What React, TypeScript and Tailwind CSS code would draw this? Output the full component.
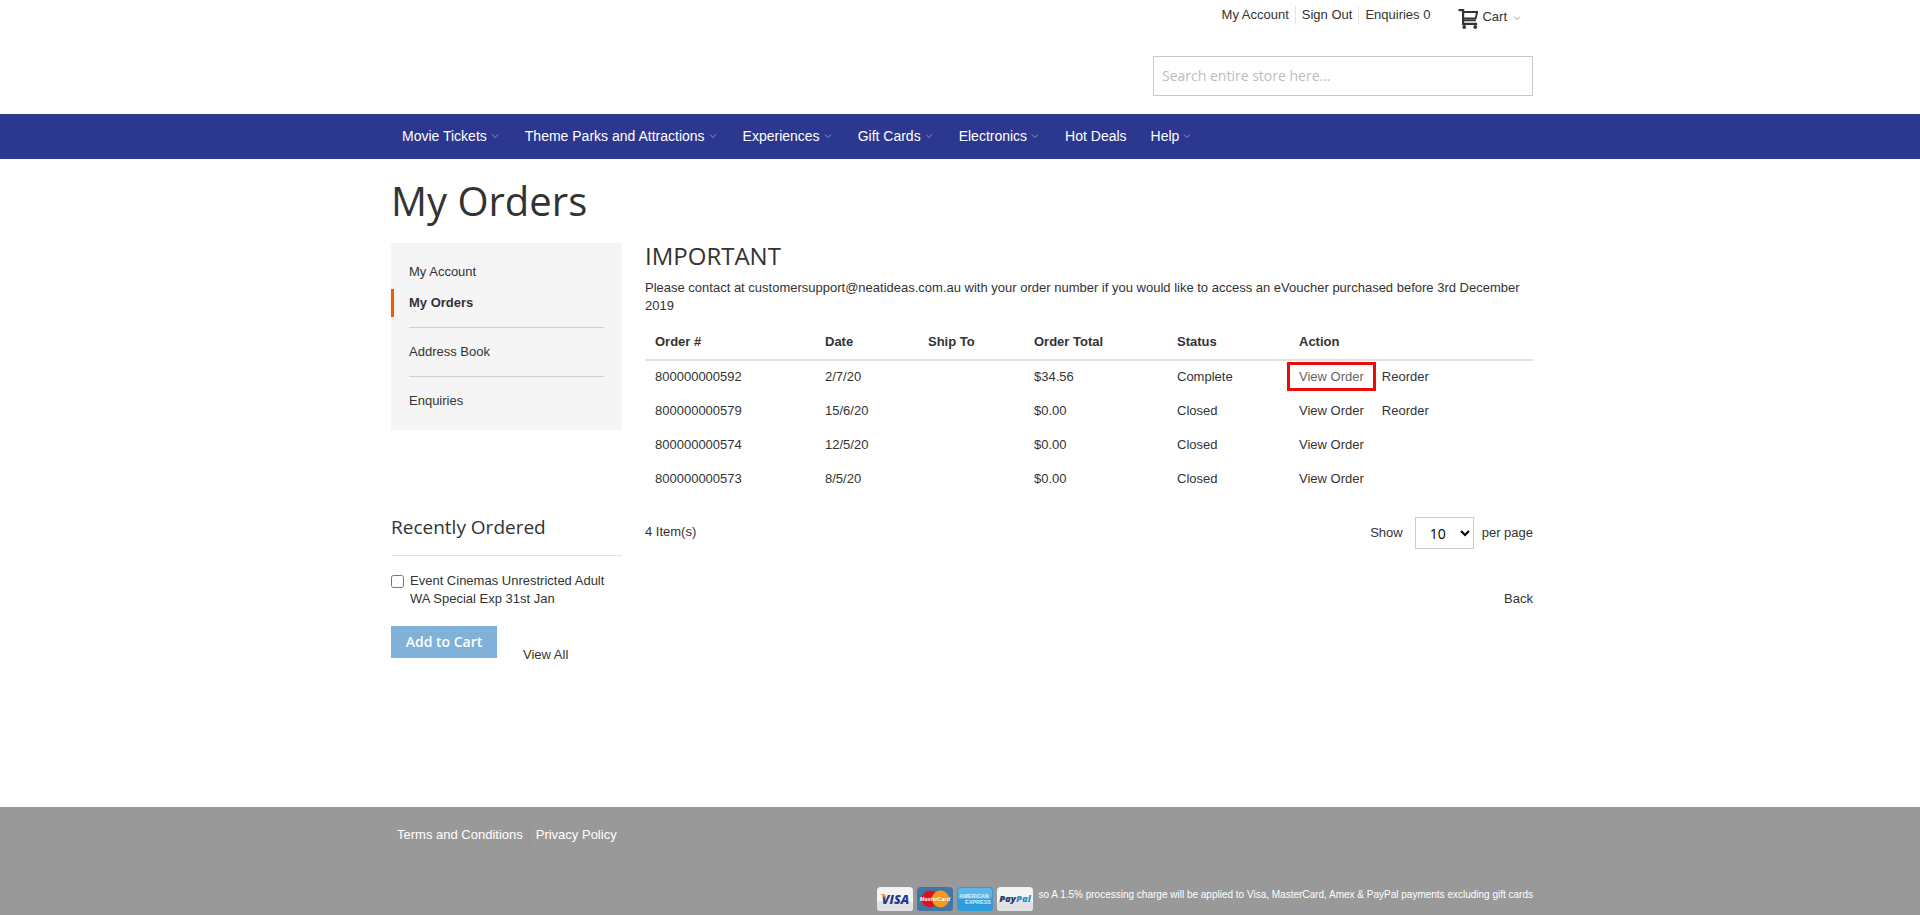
import React, { useState } from 'react';
import clsx from 'clsx';

interface NavItem {
  label: string;
  hasMenu: boolean;
}

interface Order {
  id: string;
  date: string;
  shipTo: string;
  total: string;
  status: string;
  canReorder: boolean;
}

const navItems: NavItem[] = [
  { label: 'Movie Tickets', hasMenu: true },
  { label: 'Theme Parks and Attractions', hasMenu: true },
  { label: 'Experiences', hasMenu: true },
  { label: 'Gift Cards', hasMenu: true },
  { label: 'Electronics', hasMenu: true },
  { label: 'Hot Deals', hasMenu: false },
  { label: 'Help', hasMenu: true },
];

const orders: Order[] = [
  { id: '800000000592', date: '2/7/20', shipTo: '', total: '$34.56', status: 'Complete', canReorder: true },
  { id: '800000000579', date: '15/6/20', shipTo: '', total: '$0.00', status: 'Closed', canReorder: true },
  { id: '800000000574', date: '12/5/20', shipTo: '', total: '$0.00', status: 'Closed', canReorder: false },
  { id: '800000000573', date: '8/5/20', shipTo: '', total: '$0.00', status: 'Closed', canReorder: false },
];

const columns = [
  { label: 'Order #', width: 'w-[170px]' },
  { label: 'Date', width: 'w-[103px]' },
  { label: 'Ship To', width: 'w-[106px]' },
  { label: 'Order Total', width: 'w-[143px]' },
  { label: 'Status', width: 'w-[122px]' },
  { label: 'Action', width: 'w-auto' },
];

const Container: React.FC<{ className?: string; children: React.ReactNode }> = ({ className, children }) => (
  <div className={clsx('mx-auto w-full max-w-[1146px] pl-1', className)}>{children}</div>
);

const Chevron: React.FC<{ className?: string }> = ({ className }) => (
  <svg className={clsx('h-2 w-2', className)} viewBox="0 0 8 8" fill="none" stroke="currentColor" aria-hidden="true">
    <path d="M1 2.5 4 5.5 7 2.5" />
  </svg>
);

const CartIcon = () => (
  <svg className="h-5 w-5" viewBox="0 0 20 20" fill="none" stroke="#333" aria-hidden="true">
    <path d="M.5 1.2h4.6v13.6h14" strokeWidth="2.2" />
    <path d="M5 3h14.2l-1.6 6.4H5M5 11.4h13" strokeWidth="1.9" />
    <circle cx="6.2" cy="18" r="1.9" fill="#333" stroke="none" />
    <circle cx="17.2" cy="18" r="1.9" fill="#333" stroke="none" />
  </svg>
);

const Header = () => (
  <header>
    <Container className="flex flex-col items-end">
      <div className="flex h-8 items-start pt-1.5 pr-3">
        <ul className="flex items-center">
          <li><a href="#account">My Account</a></li>
          <li className="ml-1.5 border-l border-[#e4e4e4] pl-1.5"><a href="#signout">Sign Out</a></li>
          <li className="ml-1.5 border-l border-[#e4e4e4] pl-1.5"><a href="#enquiries">Enquiries 0</a></li>
        </ul>
        <a href="#cart" className="ml-7 flex items-center pt-0.5">
          <CartIcon />
          <span className="ml-1 pb-1">Cart</span>
          <Chevron className="mb-0.5 ml-1.5 text-[#999]" />
        </a>
      </div>
      <input
        type="search"
        aria-label="Search"
        placeholder="Search entire store here..."
        className="mt-6 mb-[18px] h-10 w-[380px] border border-[#c8c8c8] bg-white px-2 pb-0.5 font-['Open_Sans',sans-serif] text-sm outline-none placeholder:text-[#bdbdbd]"
      />
    </Container>
    <nav className="bg-[#2c378f] text-white">
      <Container className="flex h-[45px] items-center gap-6 pb-0.5 text-sm">
        {navItems.map((item, i) => (
          <a key={item.label} href="#" className={clsx('flex items-center', i === 0 && 'ml-[11px]', item.hasMenu && 'pr-0.5')}>
            {item.label}
            {item.hasMenu && <Chevron className="ml-1 text-[#8a91c4]" />}
          </a>
        ))}
      </Container>
    </nav>
  </header>
);

const AccountMenu = () => (
  <ul className="bg-[#f5f5f5] py-[15px]">
    <li><a href="#account" className="block px-[18px] py-[5px]">My Account</a></li>
    <li className="mt-[3px] border-l-3 border-[#ff5501] px-[15px] py-[5px]"><strong>My Orders</strong></li>
    <li className="mx-[18px] my-2.5 border-t border-[#d1d1d1]"></li>
    <li><a href="#address" className="block px-[18px] py-[5px]">Address Book</a></li>
    <li className="mx-[18px] my-2.5 border-t border-[#d1d1d1]"></li>
    <li><a href="#enquiries" className="block px-[18px] py-[5px]">Enquiries</a></li>
  </ul>
);

const RecentlyOrdered = () => {
  const [checked, setChecked] = useState(false);

  return (
    <section className="mt-[85px]">
      <h2 className="border-b border-[#e5e5e5] pb-4 font-['Open_Sans',sans-serif] text-[19px] leading-6">Recently Ordered</h2>
      <div className="mt-4 flex items-start">
        <input
          id="recent-item"
          type="checkbox"
          checked={checked}
          onChange={(e) => setChecked(e.target.checked)}
          className="mt-[3px] h-[13px] w-[13px]"
        />
        <label htmlFor="recent-item" className="ml-1.5 w-[205px]">Event Cinemas Unrestricted Adult WA Special Exp 31st Jan</label>
      </div>
      <div className="mt-[18px] flex">
        <button type="button" className="h-8 w-[106px] bg-[#7fb1d9] font-['Open_Sans',sans-serif] text-sm font-semibold text-white">
          Add to Cart
        </button>
        <a href="#all" className="ml-[26px] mt-5">View All</a>
      </div>
    </section>
  );
};

const OrdersTable = () => (
  <table className="mt-[11px] w-full table-fixed border-collapse text-left">
    <thead>
      <tr className="border-b-2 border-[#e2e2e2]">
        {columns.map((col) => (
          <th key={col.label} scope="col" className={clsx('px-2.5 pt-[7px] pb-2 font-bold', col.width)}>{col.label}</th>
        ))}
      </tr>
    </thead>
    <tbody>
      {orders.map((order, i) => (
        <tr key={order.id}>
          <td className="px-2.5 pt-[7px] pb-[9px]">{order.id}</td>
          <td className="px-2.5 pt-[7px] pb-[9px]">{order.date}</td>
          <td className="px-2.5 pt-[7px] pb-[9px]">{order.shipTo}</td>
          <td className="px-2.5 pt-[7px] pb-[9px]">{order.total}</td>
          <td className="px-2.5 pt-[7px] pb-[9px]">{order.status}</td>
          <td className="px-2.5 pt-[7px] pb-[9px]">
            <a href="#view" className={clsx('relative', i === 0 && 'text-[#666]')}>
              View Order
              {i === 0 && <span className="absolute -inset-x-3 -inset-y-[7px] border-3 border-[#ea0b0b]"></span>}
            </a>
            {order.canReorder && <a href="#reorder" className="ml-[18px]">Reorder</a>}
          </td>
        </tr>
      ))}
    </tbody>
  </table>
);

const Toolbar = () => {
  const [limit, setLimit] = useState('10');

  return (
    <div className="mt-5 flex items-start justify-between">
      <p className="mt-1.5">4 Item(s)</p>
      <div className="flex items-center">
        <label htmlFor="limiter">Show</label>
        <select
          id="limiter"
          value={limit}
          onChange={(e) => setLimit(e.target.value)}
          className="mr-2 ml-3 h-8 w-[59px] border border-[#ccc] bg-white pl-2.5 font-['Open_Sans',sans-serif] text-sm text-black"
        >
          <option value="10">10</option>
          <option value="20">20</option>
          <option value="50">50</option>
        </select>
        <span>per page</span>
      </div>
    </div>
  );
};

const PaymentCards = () => (
  <div className="flex gap-1">
    <svg className="h-6 w-9" viewBox="0 0 36 24" role="img" aria-label="Visa">
      <rect width="36" height="24" rx="3.5" fill="#f4f4f5" />
      <rect y="14" width="36" height="10" rx="3.5" fill="#e2e2e5" />
      <text x="18.5" y="16.5" textAnchor="middle" fontFamily="Open Sans" fontSize="12.5" fontWeight="800" fontStyle="italic" fill="#1f3a8c">VISA</text>
      <path d="M3.5 7h4l2 5z" fill="#e9a021" />
    </svg>
    <svg className="h-6 w-9" viewBox="0 0 36 24" role="img" aria-label="MasterCard">
      <rect width="36" height="24" rx="3.5" fill="#3f77a8" />
      <circle cx="13" cy="12" r="8.5" fill="#d9141a" />
      <circle cx="23.5" cy="12" r="8.5" fill="#f59a1c" />
      <text x="18" y="14" textAnchor="middle" fontFamily="Liberation Sans" fontSize="5.5" fontWeight="700" fontStyle="italic" fill="#fff">MasterCard</text>
    </svg>
    <svg className="h-6 w-9" viewBox="0 0 36 24" role="img" aria-label="American Express">
      <rect width="36" height="24" rx="3.5" fill="#2f9cdc" />
      <rect x="1" y="1" width="34" height="11" rx="3" fill="#5cb7e8" />
      <text x="17" y="11" textAnchor="middle" fontFamily="Liberation Sans" fontSize="5.5" fontWeight="700" fill="#d8effb">AMERICAN</text>
      <text x="21" y="17" textAnchor="middle" fontFamily="Liberation Sans" fontSize="5.5" fontWeight="700" fill="#d8effb">EXPRESS</text>
    </svg>
    <svg className="h-6 w-9" viewBox="0 0 36 24" role="img" aria-label="PayPal">
      <rect width="36" height="24" rx="3.5" fill="#f4f4f5" />
      <rect y="14" width="36" height="10" rx="3.5" fill="#e2e2e5" />
      <text x="18" y="15" textAnchor="middle" fontFamily="Open Sans" fontSize="9.5" fontWeight="800" fontStyle="italic">
        <tspan fill="#1c3a6b">Pay</tspan>
        <tspan fill="#2790c3">Pal</tspan>
      </text>
    </svg>
  </div>
);

const Footer = () => (
  <footer className="mt-auto bg-[#999] text-white">
    <Container>
      <ul className="flex pt-[19px] pl-1.5">
        <li><a href="#terms">Terms and Conditions</a></li>
        <li className="ml-1.5 border-l border-[#8f8f8f] pl-1.5"><a href="#privacy">Privacy Policy</a></li>
      </ul>
      <div className="mt-[43px] flex justify-end gap-[5px] pb-1">
        <PaymentCards />
        <p className="text-[10px] leading-4">so A 1.5% processing charge will be applied to Visa, MasterCard, Amex &amp; PayPal payments excluding gift cards</p>
      </div>
    </Container>
  </footer>
);

const App = () => (
  <div className="flex min-h-screen flex-col bg-white font-['Liberation_Sans',Arial,sans-serif] text-[13px] leading-[18px] text-[#333]">
    <Header />
    <Container>
      <h1 className="mt-[15px] font-['Open_Sans',sans-serif] text-[40px] leading-[54px]">My Orders</h1>
      <div className="mt-[15px] flex items-start gap-[23px]">
        <aside className="w-[231px] shrink-0">
          <AccountMenu />
          <RecentlyOrdered />
        </aside>
        <main className="min-w-0 flex-1">
          <h2 className="font-['Open_Sans',sans-serif] text-2xl leading-[26px]">IMPORTANT</h2>
          <p className="mt-2.5">
            Please contact at customersupport@neatideas.com.au with your order number if you would like to access an eVoucher purchased before 3rd December 2019
          </p>
          <OrdersTable />
          <Toolbar />
          <div className="mt-[41px] text-right">
            <a href="#back">Back</a>
          </div>
        </main>
      </div>
    </Container>
    <Footer />
  </div>
);

export default App;
